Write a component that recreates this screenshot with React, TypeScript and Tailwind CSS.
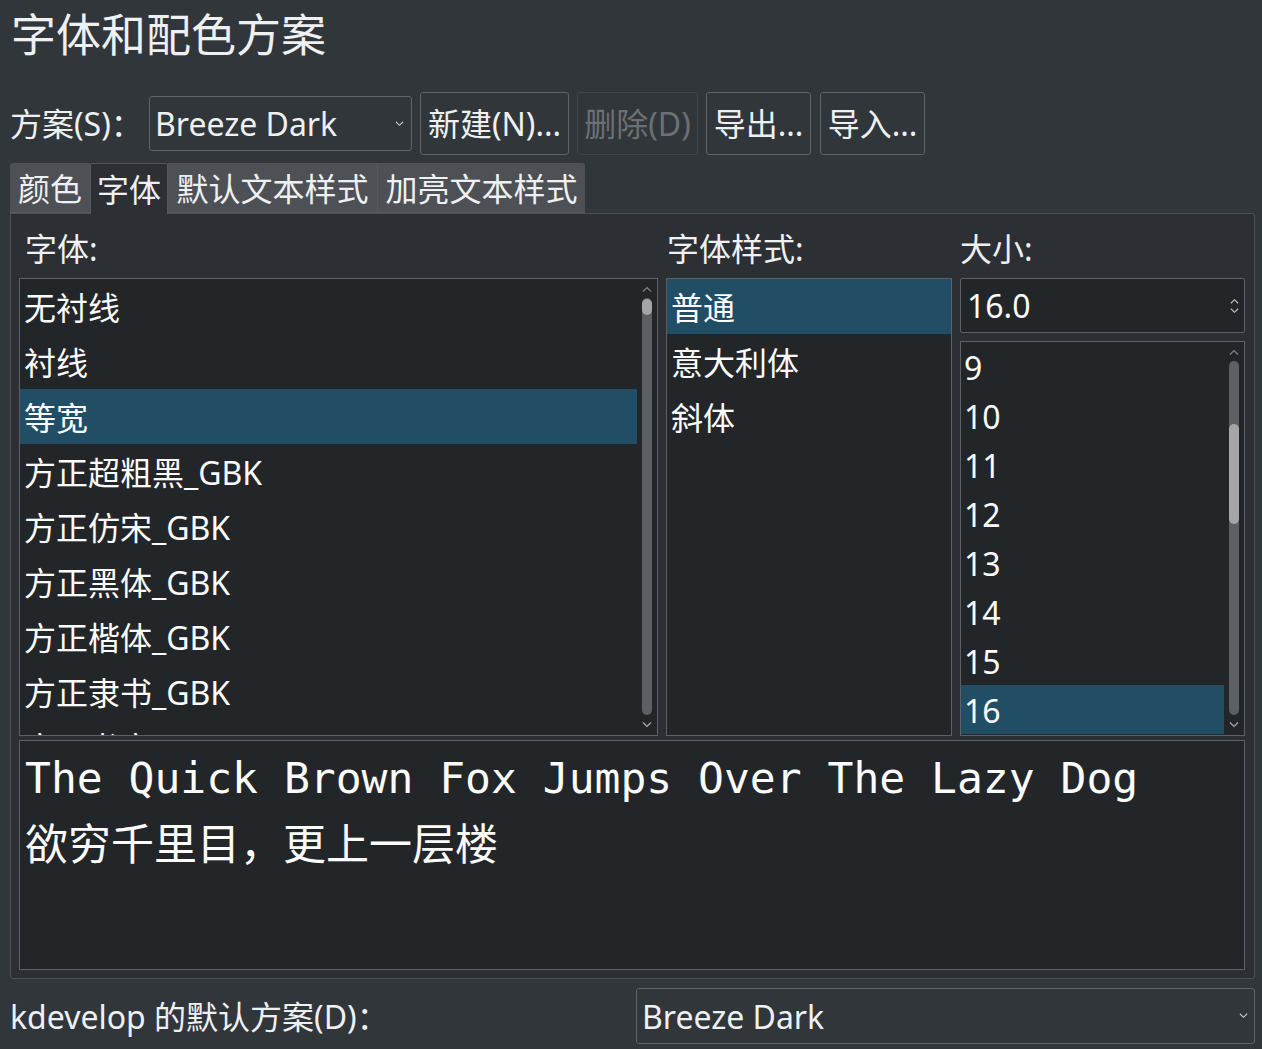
import React from "react";

const FONT = "font-['Noto_Sans','Noto_Sans_CJK_SC',sans-serif]";

function Chev({ up, className }: { up?: boolean; className?: string }) {
  return (
    <svg width="10" height="6" viewBox="0 0 10 6" className={className}>
      <path
        d={up ? "M1 5.5 L5 1.5 L9 5.5" : "M1 0.5 L5 4.5 L9 0.5"}
        stroke="currentColor"
        strokeWidth="1.2"
        fill="none"
      />
    </svg>
  );
}

function ScrollBar({ handleTop, handleHeight }: { handleTop: number; handleHeight: number }) {
  return (
    <div className="relative w-[20px] h-full shrink-0">
      <div className="absolute left-[5px] top-[7px] text-[#7f8386]">
        <Chev up />
      </div>
      <div className="absolute left-[5px] top-[19px] bottom-[20px] w-[10px] rounded-full bg-[#5c6064]">
        <div
          className="absolute left-0 w-[10px] rounded-full bg-[#a3a5a7]"
          style={{ top: handleTop, height: handleHeight }}
        />
      </div>
      <div className="absolute left-[5px] bottom-[7px] text-[#a9abad]">
        <Chev />
      </div>
    </div>
  );
}

const fonts = [
  "无衬线",
  "衬线",
  "等宽",
  "方正超粗黑_GBK",
  "方正仿宋_GBK",
  "方正黑体_GBK",
  "方正楷体_GBK",
  "方正隶书_GBK",
  "方正书宋_GBK",
];

const styles = ["普通", "意大利体", "斜体"];
const sizes = ["9", "10", "11", "12", "13", "14", "15", "16"];

export default function App() {
  return (
    <div
      className={`w-[1262px] h-[1049px] bg-[#31363b] text-[#eff0f1] ${FONT} text-[32px] overflow-hidden flex flex-col`}
    >
      {/* Title */}
      <div className="h-[68px] flex items-center pl-[11px] text-[45px] leading-none shrink-0">
        字体和配色方案
      </div>

      {/* Scheme row */}
      <div className="mt-[24px] h-[63px] flex items-center shrink-0">
        <div className="w-[149px] pl-[10px] leading-none">方案(S)：</div>
        <div className="w-[263px] h-[55px] border border-[#5f6368] rounded-[3px] flex items-center pl-[5px] pr-[7px] bg-[#31363b]">
          <span className="flex-1 leading-none">Breeze Dark</span>
          <Chev className="text-[#c8c9ca] w-[9px]" />
        </div>
        <div className="ml-[8px] w-[149px] h-[63px] border border-[#5f6368] rounded-[3px] flex items-center justify-center leading-none">
          新建(N)...
        </div>
        <div className="ml-[8px] w-[121px] h-[63px] border border-[#41454a] rounded-[3px] flex items-center justify-center leading-none text-[#6c7075]">
          删除(D)
        </div>
        <div className="ml-[8px] w-[105px] h-[63px] border border-[#5f6368] rounded-[3px] flex items-center justify-center leading-none">
          导出...
        </div>
        <div className="ml-[9px] w-[105px] h-[63px] border border-[#5f6368] rounded-[3px] flex items-center justify-center leading-none">
          导入...
        </div>
      </div>

      {/* Tabs */}
      <div className="mt-[8px] h-[50px] flex pl-[10px] shrink-0 relative z-10">
        <div className="w-[80px] h-[50px] bg-[#4d5156] rounded-tl-[3px] border-b border-[#55595e] flex items-center justify-center leading-none pt-[3px]">
          颜色
        </div>
        <div className="w-[78px] h-[51px] bg-[#2c3035] border-l border-t border-r border-[#54585d] rounded-t-[2px] flex items-center justify-center leading-none pt-[2px]">
          字体
        </div>
        <div className="w-[210px] h-[50px] bg-[#4d5156] border-r border-b border-[#55595e] flex items-center justify-center leading-none pt-[3px]">
          默认文本样式
        </div>
        <div className="w-[207px] h-[50px] bg-[#4d5156] rounded-tr-[3px] border-b border-[#55595e] flex items-center justify-center leading-none pt-[3px]">
          加亮文本样式
        </div>
      </div>

      {/* Panel */}
      <div className="ml-[10px] w-[1245px] h-[766px] border border-[#4e5257] bg-[#2c3035] rounded-b-[3px] rounded-tr-[3px] flex flex-col pl-[8px] pr-[9px] shrink-0">
        {/* labels */}
        <div className="h-[64px] flex items-center pt-[5px] shrink-0 leading-none">
          <div className="w-[647px] pl-[6px]">字体:</div>
          <div className="w-[294px] pl-[1px]">字体样式:</div>
          <div className="flex-1">大小:</div>
        </div>

        {/* lists */}
        <div className="h-[458px] flex gap-[8px] shrink-0">
          {/* font family list */}
          <div className="w-[639px] h-[458px] border border-[#5d6166] bg-[#232629] flex overflow-hidden">
            <div className="flex-1 flex flex-col">
              {fonts.map((f, i) => (
                <div
                  key={f}
                  className={`h-[55px] shrink-0 flex items-center pl-[4px] pt-[2px] leading-none text-[#fcfcfc] ${
                    i === 2 ? "bg-[#214e65]" : ""
                  }`}
                >
                  {f}
                </div>
              ))}
            </div>
            <ScrollBar handleTop={1} handleHeight={16} />
          </div>

          {/* style list */}
          <div className="w-[286px] h-[458px] border border-[#5d6166] bg-[#232629] flex flex-col overflow-hidden">
            {styles.map((s, i) => (
              <div
                key={s}
                className={`h-[55px] shrink-0 flex items-center pl-[4px] pt-[2px] leading-none text-[#fcfcfc] ${
                  i === 0 ? "bg-[#214e65]" : ""
                }`}
              >
                {s}
              </div>
            ))}
          </div>

          {/* size column */}
          <div className="w-[285px] h-[458px] flex flex-col gap-[8px]">
            <div className="h-[55px] shrink-0 border border-[#5d6166] rounded-[2px] bg-[#232629] flex items-center pl-[6px] pr-[5px]">
              <span className="flex-1 leading-none text-[#fcfcfc] pt-[1px]">16.0</span>
              <div className="flex flex-col gap-[4px] text-[#c3c5c6]">
                <Chev up className="w-[9px]" />
                <Chev className="w-[9px]" />
              </div>
            </div>
            <div className="h-[395px] shrink-0 border border-[#5d6166] bg-[#232629] flex overflow-hidden">
              <div className="flex-1 flex flex-col">
                {sizes.map((s, i) => (
                  <div
                    key={s}
                    className={`h-[49px] shrink-0 flex items-center pl-[3px] pt-[2px] leading-none text-[#fcfcfc] ${
                      i === 7 ? "bg-[#214e65]" : ""
                    }`}
                  >
                    {s}
                  </div>
                ))}
              </div>
              <ScrollBar handleTop={63} handleHeight={100} />
            </div>
          </div>
        </div>

        {/* preview */}
        <div className="mt-[4px] h-[230px] shrink-0 border border-[#5d6166] bg-[#232629] pl-[5px] pt-[4px] font-['DejaVu_Sans_Mono','Noto_Sans_CJK_SC',monospace] text-[43px] leading-[67px] text-[#fcfcfc] whitespace-pre overflow-hidden">
          <div>The Quick Brown Fox Jumps Over The Lazy Dog</div>
          <div>欲穷千里目，更上一层楼</div>
        </div>
      </div>

      {/* bottom row */}
      <div className="flex-1 flex pt-[9px]">
        <div className="flex-1 pl-[10px] h-[56px] flex items-center leading-none pt-[2px]">
          kdevelop 的默认方案(D)：
        </div>
        <div className="w-[619px] mr-[7px] h-[56px] border border-[#5f6368] rounded-[3px] flex items-center pl-[5px] pr-[6px]">
          <span className="flex-1 leading-none pt-[2px]">Breeze Dark</span>
          <Chev className="text-[#c8c9ca] w-[9px]" />
        </div>
      </div>
    </div>
  );
}
